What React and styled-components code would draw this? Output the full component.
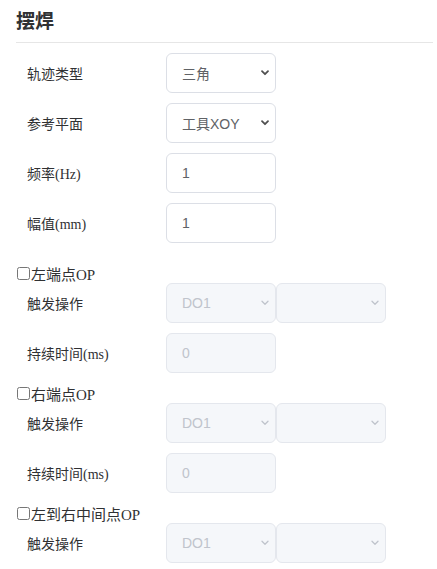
import React from "react";
import styled, { createGlobalStyle } from "styled-components";

const GlobalStyle = createGlobalStyle`
  body {
    margin: 0;
    background: #fff;
    font-family: "Liberation Serif", "Noto Sans CJK SC", serif;
    color: #303133;
  }
`;

const Panel = styled.div`
  padding: 0 0 0 16px;
`;

const Title = styled.h3`
  margin: 0;
  padding: 7px 0 9px 0;
  font-family: "Noto Sans CJK SC", sans-serif;
  font-size: 19px;
  font-weight: 700;
  line-height: 26px;
  color: #303133;
  border-bottom: 1px solid #e6e6e6;
  margin-right: 4px;
`;

const Section = styled.div`
  padding-top: 10px;
  padding-bottom: ${(p) => (p.$extra ? "10px" : "0")};
`;

const Row = styled.div`
  display: flex;
  align-items: center;
  height: 40px;
  margin-bottom: 10px;
`;

const Label = styled.label`
  width: 139px;
  padding-left: 11px;
  font-size: 14px;
  color: #303133;
`;

const Controls = styled.div`
  display: flex;
`;

const SelectBox = styled.div`
  position: relative;
  box-sizing: border-box;
  width: 110px;
  height: 40px;
  border: 1px solid ${(p) => (p.$disabled ? "#e4e7ed" : "#dcdfe6")};
  border-radius: 6px;
  background: ${(p) => (p.$disabled ? "#f5f7fa" : "#fff")};
  display: flex;
  align-items: center;
  padding: 0 15px;
  font-family: "Liberation Sans", "Noto Sans CJK SC", sans-serif;
  font-size: 14px;
  color: ${(p) => (p.$disabled ? "#c0c4cc" : "#606266")};
`;

const Chevron = styled.svg`
  position: absolute;
  right: 5px;
  top: 50%;
  margin-top: -4px;
`;

const Input = styled.input`
  box-sizing: border-box;
  width: 110px;
  height: 40px;
  border: 1px solid ${(p) => (p.disabled ? "#e4e7ed" : "#dcdfe6")};
  border-radius: 6px;
  background: ${(p) => (p.disabled ? "#f5f7fa" : "#fff")};
  padding: 0 15px;
  font-family: "Liberation Sans", "Noto Sans CJK SC", sans-serif;
  font-size: 14px;
  color: ${(p) => (p.disabled ? "#c0c4cc" : "#606266")};
  outline: none;
`;

const CheckLine = styled.label`
  display: flex;
  align-items: center;
  height: 20px;
  font-size: 15px;
  color: #303133;

  input {
    margin: 0 1px 0 1px;
    width: 13px;
    height: 13px;
  }
`;

function Select({ value, disabled }) {
  return (
    <SelectBox $disabled={disabled}>
      {value}
      <Chevron width="10" height="8" viewBox="0 0 10 8">
        <path
          d="M2 2.2 L5 5.2 L8 2.2"
          fill="none"
          stroke={disabled ? "#c0c4cc" : "#505050"}
          strokeWidth={disabled ? "1.3" : "1.8"}
          strokeLinecap="round"
          strokeLinejoin="round"
        />
      </Chevron>
    </SelectBox>
  );
}

function OpGroup({ title, withDuration }) {
  return (
    <div>
      <CheckLine>
        <input type="checkbox" />
        {title}
      </CheckLine>
      <Row>
        <Label>触发操作</Label>
        <Controls>
          <Select value="DO1" disabled />
          <Select value="" disabled />
        </Controls>
      </Row>
      {withDuration && (
        <Row>
          <Label>持续时间(ms)</Label>
          <Input value="0" disabled readOnly />
        </Row>
      )}
    </div>
  );
}

export default function App() {
  return (
    <Panel>
      <GlobalStyle />
      <Title>摆焊</Title>
      <Section $extra>
        <Row>
          <Label>轨迹类型</Label>
          <Select value="三角" />
        </Row>
        <Row>
          <Label>参考平面</Label>
          <Select value="工具XOY" />
        </Row>
        <Row>
          <Label>频率(Hz)</Label>
          <Input defaultValue="1" />
        </Row>
        <Row>
          <Label>幅值(mm)</Label>
          <Input defaultValue="1" />
        </Row>
      </Section>
      <OpGroup title="左端点OP" withDuration />
      <OpGroup title="右端点OP" withDuration />
      <OpGroup title="左到右中间点OP" />
    </Panel>
  );
}
